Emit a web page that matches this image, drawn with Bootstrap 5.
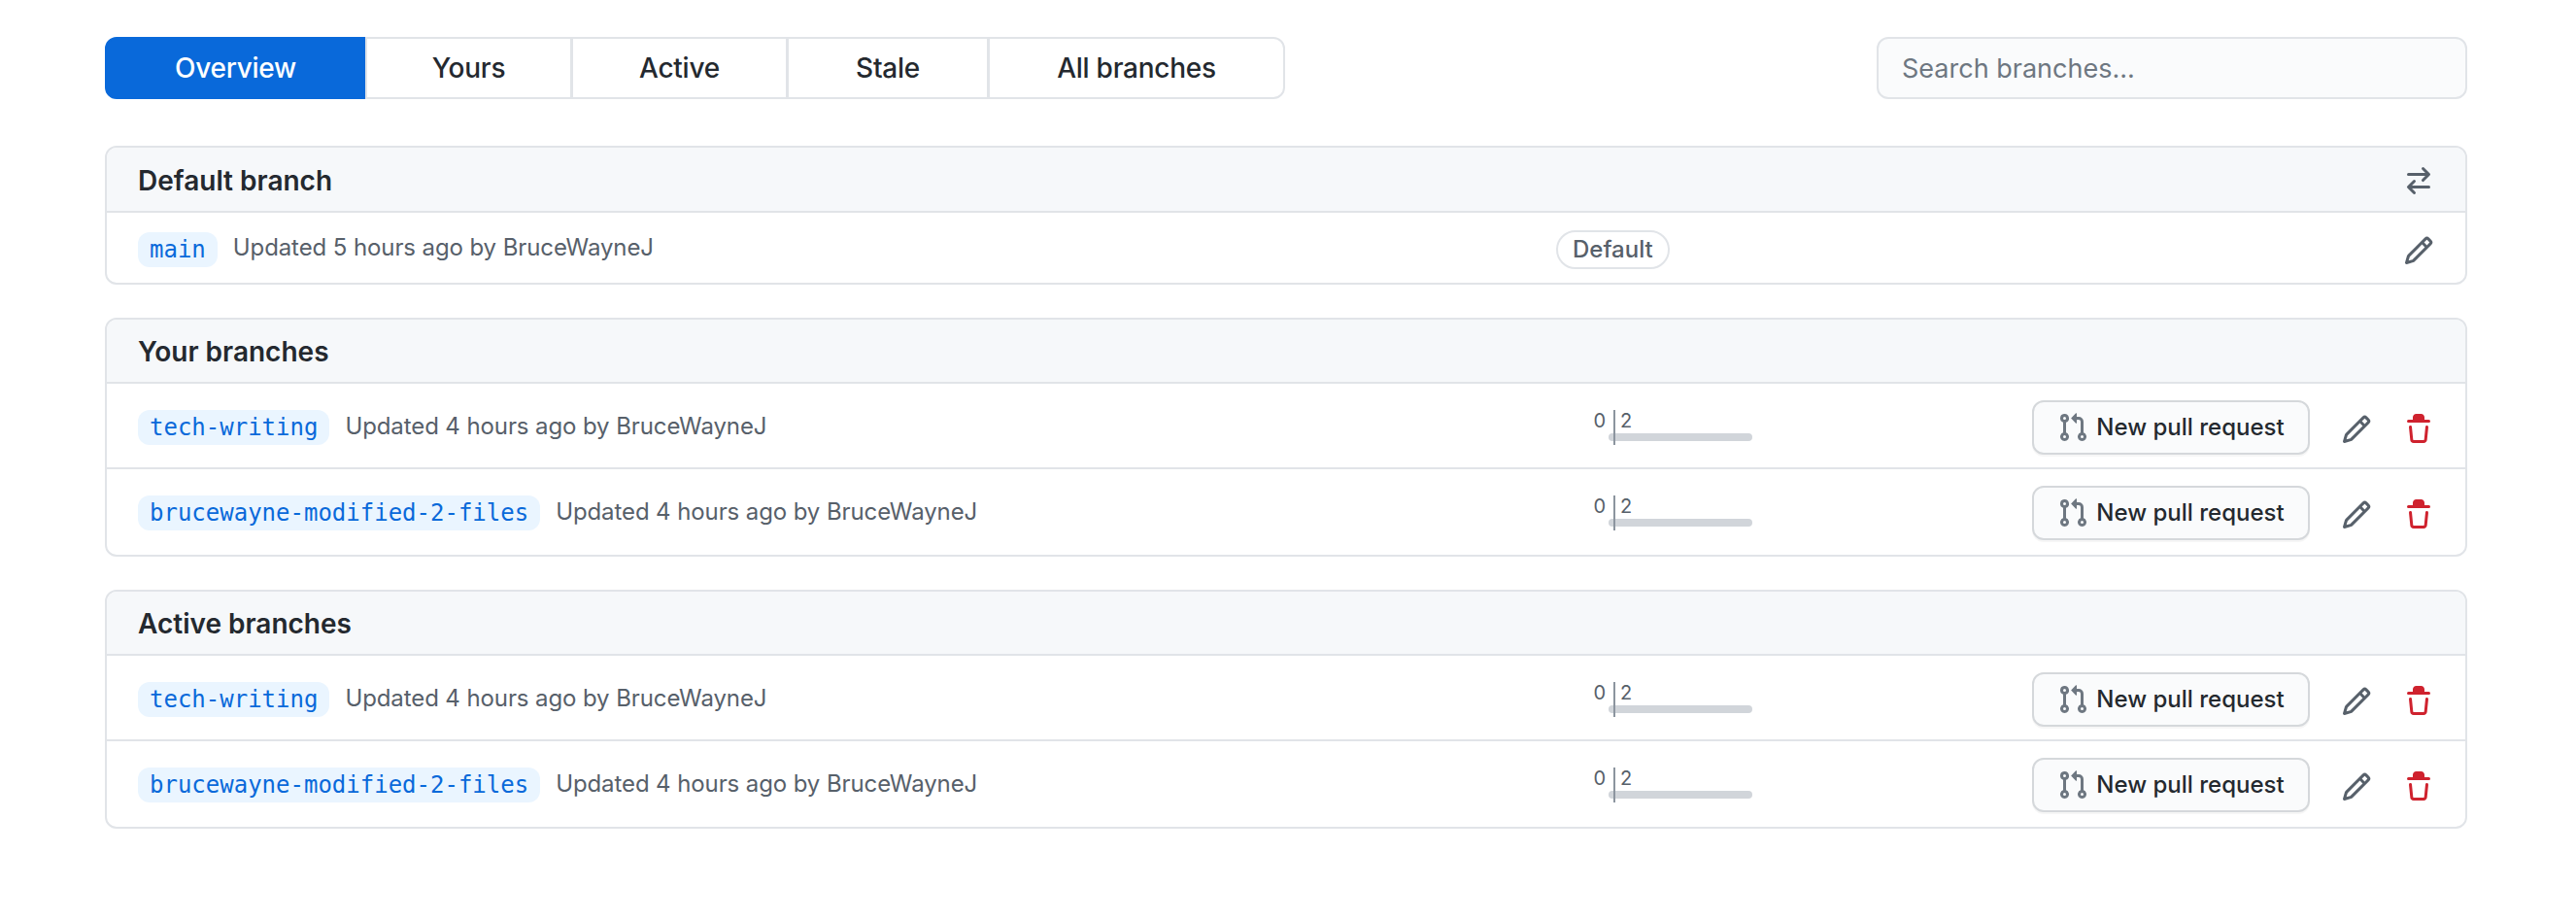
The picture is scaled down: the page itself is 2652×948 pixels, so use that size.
<!DOCTYPE html>
<html lang="en"><head><meta charset="utf-8"><title>Branches</title>
<link href="https://cdn.jsdelivr.net/npm/bootstrap@5.3.0/dist/css/bootstrap.min.css" rel="stylesheet">
<style>
body{font-family:Inter,"Liberation Sans",sans-serif;color:#24292f;background:#fff;padding:38px 112px 0 108px;font-size:24px}
.subhead{margin-bottom:48px;height:64px}
.tabgroup .tabbtn{font-size:28px;font-weight:500;letter-spacing:-.25px;color:#24292f;background:#fff;border:2px solid #e1e4e8;border-radius:12px;height:64px;display:flex;align-items:center;justify-content:center;padding:0}
.tabgroup .tabbtn.sel{background:#0969da;border-color:#0969da;color:#fff}
.t1{width:269px}.t2{width:213px}.t3{width:223px}.t4{width:208px}.t5{width:306px}
.searchbox.form-control{width:608px;height:64px;background:#fafbfc;border:2px solid #e1e4e8;border-radius:12px;font-size:27px;padding:0 24px;color:#24292f}
.searchbox::placeholder{color:#6e7781;opacity:1}
.branchcard.card{border:2px solid #e1e4e8;border-radius:12px;margin-bottom:34px;--bs-card-inner-border-radius:10px}
.branchcard .card-header{background:#f6f8fa;border-bottom:2px solid #e1e4e8;height:66px;padding:2px 32px 0;font-size:28px;font-weight:600;color:#24292f}
.branchcard .card-header.tall{height:67px;padding-top:3px}
.branchcard .list-group-item{padding:4px 32px 0;height:88px;border-style:solid;border-color:#e1e4e8;border-width:0 0 2px;background:transparent}
.branchcard .list-group-item:last-child{border-bottom:2px solid transparent}
.branchcard .list-group-item.short{height:72px;padding-top:5px}
.namecell{width:1460px;flex:none}
.pill{font-family:"DejaVu Sans Mono","Liberation Mono",monospace;font-size:24px;line-height:36px;height:36px;padding:0 12px;border-radius:12px;background:#eaf5ff;color:#0969da;text-decoration:none;margin-right:16px}
.when{color:#57606a;font-size:24px;letter-spacing:-.1px;margin-top:-3px;white-space:nowrap}
.deflabel{font-size:24px;font-weight:500;color:#57606a;border:2px solid #e1e4e8;border-radius:20px;height:40px;line-height:36px;padding:0 15px;background:#fff}
.diffcell{width:172px;height:36px;flex:none;margin-left:30px;font-size:20px;line-height:22px;color:#57606a}
.diffl{width:29px;flex:none;text-align:right;padding-right:8px}
.diffr{flex:1;border-left:2px solid #8c959f;padding-left:5px}
.difft{height:24px}
.barl{height:8px;width:5px;margin-left:auto;margin-right:-8px;background:#d1d5da;border-radius:4px 0 0 4px}
.barr{height:8px;margin-left:-5px;background:#d1d5da;border-radius:0 4px 4px 0}
.prbtn.btn{height:56px;width:286px;font-size:24px;font-weight:500;color:#24292f;background:#fafbfc;border:2px solid #d5d8db;border-radius:12px;box-shadow:0 2px 0 rgba(27,31,36,.04);padding:0;gap:8px}
.ico{width:32px;height:32px;fill:currentColor;flex:none}
.ico-gray{color:#57606a}
.ico-pr{color:#6e7781}
.ico-red{color:#cf222e}
.actions{margin-left:auto;gap:32px}
.icons{gap:32px;margin-top:4px}
.solo{margin-top:2px}
</style></head><body>
<svg width="0" height="0" class="d-none">
<symbol id="i-pencil" viewBox="0 0 16 16"><path d="M11.013 1.427a1.75 1.75 0 012.474 0l1.086 1.086a1.75 1.75 0 010 2.474l-8.61 8.61c-.21.21-.47.364-.756.445l-3.251.93a.75.75 0 01-.927-.928l.929-3.25a1.75 1.75 0 01.445-.758l8.61-8.61zm1.414 1.06a.25.25 0 00-.354 0L10.811 3.75l1.439 1.44 1.263-1.263a.25.25 0 000-.354l-1.086-1.086zM11.189 6.25L9.75 4.81l-6.286 6.287a.25.25 0 00-.064.108l-.558 1.953 1.953-.558a.249.249 0 00.108-.064l6.286-6.286z"/></symbol>
<symbol id="i-trash" viewBox="0 0 16 16"><path d="M6.5 1.75a.25.25 0 01.25-.25h2.5a.25.25 0 01.25.25V3h-3V1.75zm4.5 0V3h2.25a.75.75 0 010 1.5H2.75a.75.75 0 010-1.5H5V1.75C5 .784 5.784 0 6.75 0h2.5C10.216 0 11 .784 11 1.75zM4.496 6.675a.75.75 0 10-1.492.15l.66 6.6A1.75 1.75 0 005.405 15h5.19c.9 0 1.652-.681 1.741-1.576l.66-6.6a.75.75 0 00-1.492-.149l-.66 6.6a.25.25 0 01-.249.225h-5.19a.25.25 0 01-.249-.225l-.66-6.6z"/></symbol>
<symbol id="i-pr" viewBox="0 0 16 16"><path d="M7.177 3.073L9.573.677A.25.25 0 0110 .854v4.792a.25.25 0 01-.427.177L7.177 3.427a.25.25 0 010-.354zM3.75 2.5a.75.75 0 100 1.5.75.75 0 000-1.5zm-2.25.75a2.25 2.25 0 113 2.122v5.256a2.251 2.251 0 11-1.5 0V5.372A2.25 2.25 0 011.5 3.25zM11 2.5h-1V4h1a1 1 0 011 1v5.628a2.251 2.251 0 101.5 0V5A2.5 2.5 0 0011 2.5zm1 10.25a.75.75 0 111.5 0 .75.75 0 01-1.5 0zM3.75 12a.75.75 0 100 1.5.75.75 0 000-1.5z"/></symbol>
<symbol id="i-switch" viewBox="0 0 16 16"><path d="M5.22 14.78a.75.75 0 001.06-1.06L4.56 12h8.69a.75.75 0 000-1.5H4.56l1.72-1.72a.75.75 0 00-1.06-1.06l-3 3a.75.75 0 000 1.06l3 3zm5.56-6.5a.75.75 0 11-1.06-1.06l1.72-1.72H2.75a.75.75 0 010-1.5h8.69L9.72 2.28a.75.75 0 011.06-1.06l3 3a.75.75 0 010 1.06l-3 3z"/></symbol>
</svg>

<div class="subhead d-flex justify-content-between">
  <nav class="btn-group tabgroup" role="group" aria-label="Branch filter">
    <a class="btn tabbtn sel t1" href="#">Overview</a>
    <a class="btn tabbtn t2" href="#">Yours</a>
    <a class="btn tabbtn t3" href="#">Active</a>
    <a class="btn tabbtn t4" href="#">Stale</a>
    <a class="btn tabbtn t5" href="#">All branches</a>
  </nav>
  <input class="form-control searchbox" type="search" placeholder="Search branches..." aria-label="Search branches">
</div>

<div class="card branchcard">
  <div class="card-header tall d-flex align-items-center justify-content-between">Default branch
    <svg class="ico ico-gray"><use href="#i-switch"/></svg></div>
  <ul class="list-group list-group-flush">
    <li class="list-group-item short d-flex align-items-center">
      <div class="namecell d-flex align-items-center"><a class="pill" href="#">main</a><span class="when">Updated 5 hours ago by BruceWayneJ</span></div>
      <span class="deflabel">Default</span>
      <div class="actions solo d-flex"><svg class="ico ico-gray"><use href="#i-pencil"/></svg></div>
    </li>
  </ul>
</div>

<div class="card branchcard">
  <div class="card-header d-flex align-items-center">Your branches</div>
  <ul class="list-group list-group-flush">
    <li class="list-group-item d-flex align-items-center">
      <div class="namecell d-flex align-items-center"><a class="pill" href="#">tech-writing</a><span class="when">Updated 4 hours ago by BruceWayneJ</span></div>
      <div class="diffcell d-flex"><div class="diffl"><div class="difft">0</div><div class="barl"></div></div><div class="diffr"><div class="difft">2</div><div class="barr"></div></div></div>
      <div class="actions d-flex align-items-center"><a class="btn prbtn d-flex align-items-center justify-content-center" href="#"><svg class="ico ico-pr"><use href="#i-pr"/></svg>New pull request</a><div class="icons d-flex"><svg class="ico ico-gray"><use href="#i-pencil"/></svg><svg class="ico ico-red"><use href="#i-trash"/></svg></div></div>
    </li>
    <li class="list-group-item d-flex align-items-center">
      <div class="namecell d-flex align-items-center"><a class="pill" href="#">brucewayne-modified-2-files</a><span class="when">Updated 4 hours ago by BruceWayneJ</span></div>
      <div class="diffcell d-flex"><div class="diffl"><div class="difft">0</div><div class="barl"></div></div><div class="diffr"><div class="difft">2</div><div class="barr"></div></div></div>
      <div class="actions d-flex align-items-center"><a class="btn prbtn d-flex align-items-center justify-content-center" href="#"><svg class="ico ico-pr"><use href="#i-pr"/></svg>New pull request</a><div class="icons d-flex"><svg class="ico ico-gray"><use href="#i-pencil"/></svg><svg class="ico ico-red"><use href="#i-trash"/></svg></div></div>
    </li>
  </ul>
</div>

<div class="card branchcard">
  <div class="card-header d-flex align-items-center">Active branches</div>
  <ul class="list-group list-group-flush">
    <li class="list-group-item d-flex align-items-center">
      <div class="namecell d-flex align-items-center"><a class="pill" href="#">tech-writing</a><span class="when">Updated 4 hours ago by BruceWayneJ</span></div>
      <div class="diffcell d-flex"><div class="diffl"><div class="difft">0</div><div class="barl"></div></div><div class="diffr"><div class="difft">2</div><div class="barr"></div></div></div>
      <div class="actions d-flex align-items-center"><a class="btn prbtn d-flex align-items-center justify-content-center" href="#"><svg class="ico ico-pr"><use href="#i-pr"/></svg>New pull request</a><div class="icons d-flex"><svg class="ico ico-gray"><use href="#i-pencil"/></svg><svg class="ico ico-red"><use href="#i-trash"/></svg></div></div>
    </li>
    <li class="list-group-item d-flex align-items-center">
      <div class="namecell d-flex align-items-center"><a class="pill" href="#">brucewayne-modified-2-files</a><span class="when">Updated 4 hours ago by BruceWayneJ</span></div>
      <div class="diffcell d-flex"><div class="diffl"><div class="difft">0</div><div class="barl"></div></div><div class="diffr"><div class="difft">2</div><div class="barr"></div></div></div>
      <div class="actions d-flex align-items-center"><a class="btn prbtn d-flex align-items-center justify-content-center" href="#"><svg class="ico ico-pr"><use href="#i-pr"/></svg>New pull request</a><div class="icons d-flex"><svg class="ico ico-gray"><use href="#i-pencil"/></svg><svg class="ico ico-red"><use href="#i-trash"/></svg></div></div>
    </li>
  </ul>
</div>
</body></html>
